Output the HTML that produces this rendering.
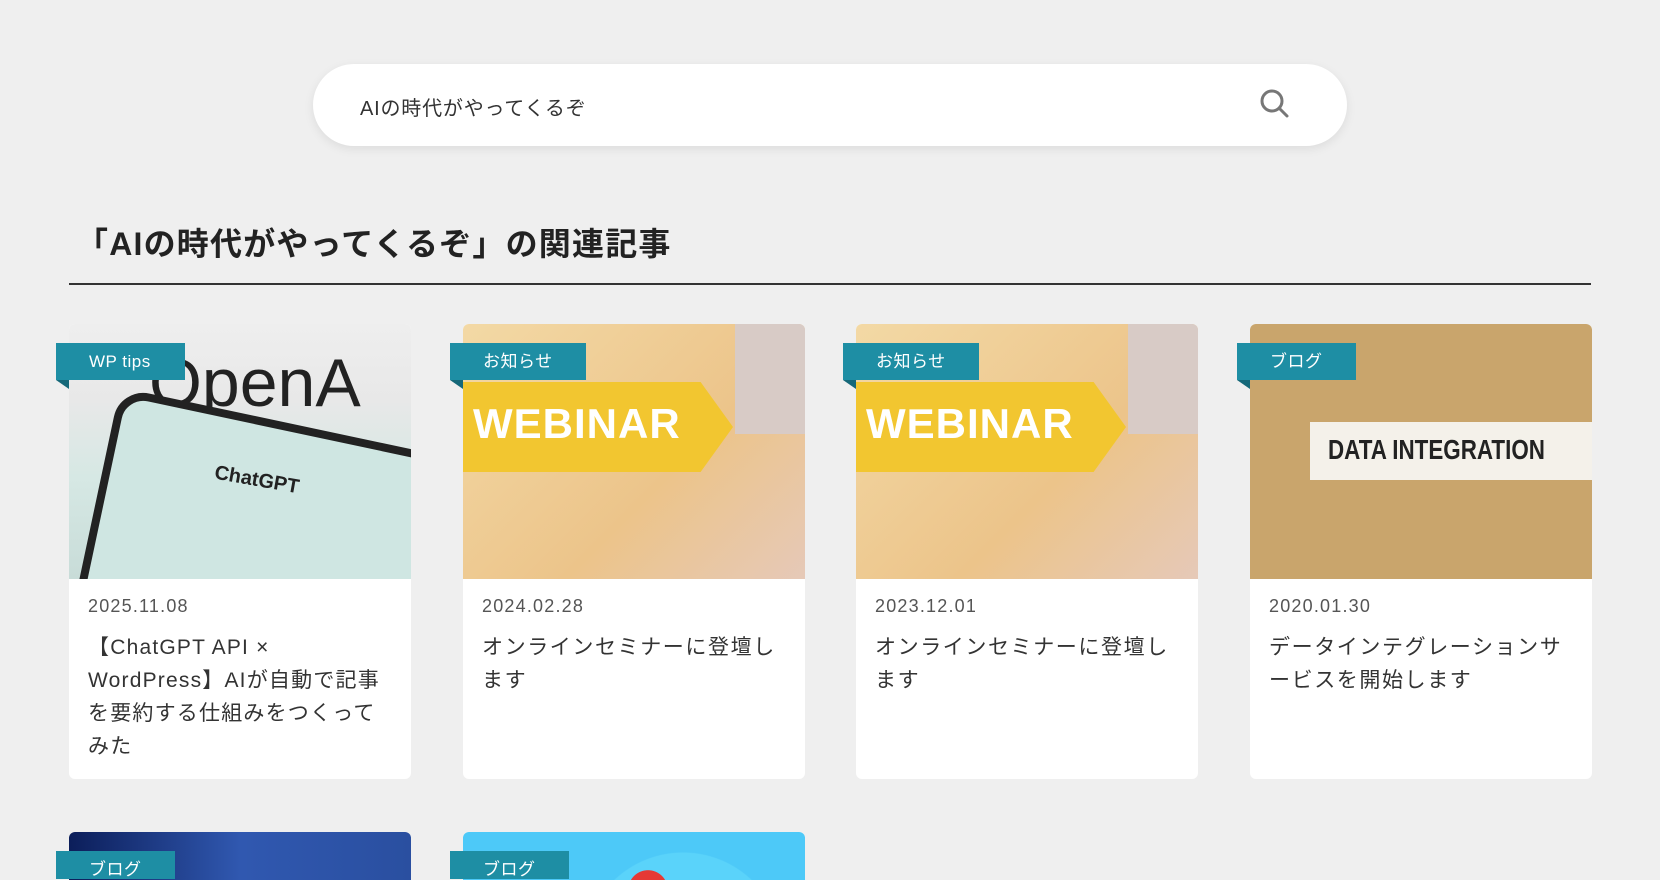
<!DOCTYPE html><html><head><meta charset="utf-8"><style>
*{margin:0;padding:0;box-sizing:border-box}
html,body{width:1660px;height:880px;overflow:hidden}
body{background:#efefef;font-family:"Liberation Sans","Noto Sans CJK JP",sans-serif;color:#333;position:relative}
.search{position:absolute;left:313px;top:64px;width:1034px;height:82px;background:#fff;border-radius:41px;box-shadow:0 3px 10px rgba(0,0,0,.08)}
.search span{position:absolute;left:47px;top:28px;font-size:20px;letter-spacing:.8px;color:#333}
h1{position:absolute;left:76px;top:219px;font-size:32px;font-weight:bold;color:#222;letter-spacing:1.2px}
.line{position:absolute;left:69px;top:283px;width:1522px;height:1.5px;background:#333}
.card{position:absolute;width:342px;background:#fff;border-radius:6px;overflow:visible}
.img{height:255px;border-radius:6px 6px 0 0;overflow:hidden;position:relative}
.lab{position:absolute;left:-13px;top:19px;height:37px;background:#1e8ea4;color:#fff;font-size:17px;line-height:37px;padding:0 0 0 33px;letter-spacing:.5px}
.lab:after{content:"";position:absolute;left:0;top:37px;border-top:9px solid #156879;border-left:13px solid transparent}
.lab.nb:after{display:none}
.date{position:absolute;left:19px;top:272px;font-size:18px;color:#555;letter-spacing:1.2px}
.t{position:absolute;left:19px;top:307px;width:305px;font-size:21px;line-height:33px;color:#333;letter-spacing:1.6px}
.web{position:absolute;left:0;top:58px;width:270px;height:90px;background:#f2c630;clip-path:polygon(0 0,88% 0,100% 50%,88% 100%,0 100%)}
.web b{position:absolute;left:10px;top:18px;font-size:42px;color:#fff;letter-spacing:1px}
</style></head><body>
<div class="search"><span>AIの時代がやってくるぞ</span></div>
<svg style="position:absolute;left:1259px;top:88px" width="32" height="32" viewBox="0 0 32 32"><circle cx="13" cy="13" r="10" fill="none" stroke="#777" stroke-width="3"/><line x1="20.5" y1="20.5" x2="28" y2="28" stroke="#777" stroke-width="3" stroke-linecap="round"/></svg>
<h1>「AIの時代がやってくるぞ」の関連記事</h1>
<div class="line"></div>

<div class="card" style="left:69px;top:324px;height:455px">
<div class="img" style="background:linear-gradient(180deg,#eee 0,#e8e8e8 30%,#d6e8e4 60%,#c8dcd8 100%)">
<div style="position:absolute;left:80px;top:20px;font-size:68px;color:#222;font-family:'Liberation Sans'">OpenA</div>
<div style="position:absolute;left:20px;top:100px;width:380px;height:260px;background:#cfe6e2;border:8px solid #222;border-radius:30px;transform:rotate(12deg)"></div>
<div style="position:absolute;left:145px;top:145px;font-size:20px;font-weight:bold;color:#222;transform:rotate(10deg)">ChatGPT</div>
</div>
<div class="lab" style="width:129px">WP tips</div>
<div class="date">2025.11.08</div>
<div class="t" style="letter-spacing:1.2px">【ChatGPT API ×<br>WordPress】AIが自動で記事を要約する仕組みをつくってみた</div>
</div>

<div class="card" style="left:463px;top:324px;height:455px">
<div class="img" style="background:linear-gradient(135deg,#f3d9a5,#ecc48a 60%,#e6c9b8)"><div class="web"><b>WEBINAR</b></div><div style="position:absolute;right:0;top:0;width:70px;height:110px;background:#d8cbc6"></div></div>
<div class="lab" style="width:136px">お知らせ</div>
<div class="date">2024.02.28</div>
<div class="t">オンラインセミナーに登壇します</div>
</div>

<div class="card" style="left:856px;top:324px;height:455px">
<div class="img" style="background:linear-gradient(135deg,#f3d9a5,#ecc48a 60%,#e6c9b8)"><div class="web"><b>WEBINAR</b></div><div style="position:absolute;right:0;top:0;width:70px;height:110px;background:#d8cbc6"></div></div>
<div class="lab" style="width:136px">お知らせ</div>
<div class="date">2023.12.01</div>
<div class="t">オンラインセミナーに登壇します</div>
</div>

<div class="card" style="left:1250px;top:324px;height:455px">
<div class="img" style="background:#c9a56c"><div style="position:absolute;left:60px;top:98px;width:282px;height:58px;background:#f4f1ea"></div><div style="position:absolute;left:78px;top:110px;font-size:28px;font-weight:bold;color:#222;white-space:nowrap;transform:scaleX(.8);transform-origin:left">DATA INTEGRATION</div></div>
<div class="lab" style="width:119px">ブログ</div>
<div class="date">2020.01.30</div>
<div class="t">データインテグレーションサービスを開始します</div>
</div>

<div class="card" style="left:69px;top:832px;height:48px"><div class="img" style="height:48px;background:linear-gradient(90deg,#0c1e5a,#3058b0 50%,#2a4fa0)"></div><div class="lab nb" style="width:119px;height:28px;overflow:hidden">ブログ</div></div>
<div class="card" style="left:463px;top:832px;height:48px"><div class="img" style="height:48px;background:radial-gradient(circle 20px at 185px 58px,#e53935 98%,transparent 100%),radial-gradient(circle 100px at 220px 120px,#5ad3fa 99%,#4dc9f8 100%)"></div><div class="lab nb" style="width:119px;height:28px;overflow:hidden">ブログ</div></div>
</body></html>
